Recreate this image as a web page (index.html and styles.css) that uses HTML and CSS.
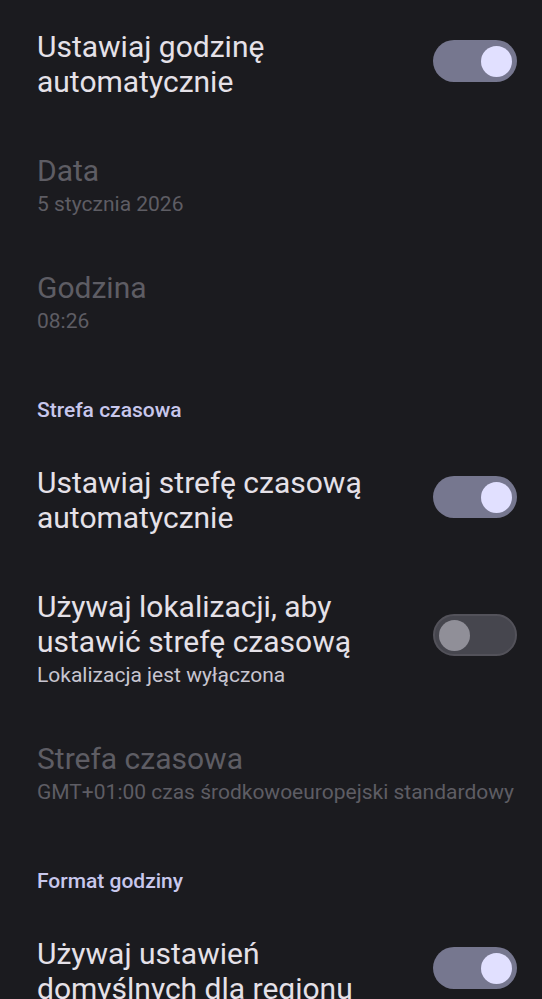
FILE: index.html
```html
<!DOCTYPE html>
<html lang="pl">
<head>
<meta charset="utf-8">
<link rel="stylesheet" href="styles.css">
</head>
<body>
<div class="list">
  <div class="item">
    <div class="text"><div class="title">Ustawiaj godzinę automatycznie</div></div>
    <div class="switch on"><span class="thumb"></span></div>
  </div>
  <div class="item disabled">
    <div class="text"><div class="title">Data</div><div class="summary">5 stycznia 2026</div></div>
  </div>
  <div class="item disabled">
    <div class="text"><div class="title">Godzina</div><div class="summary">08:26</div></div>
  </div>
  <div class="category">Strefa czasowa</div>
  <div class="item">
    <div class="text"><div class="title">Ustawiaj strefę czasową automatycznie</div></div>
    <div class="switch on"><span class="thumb"></span></div>
  </div>
  <div class="item">
    <div class="text"><div class="title">Używaj lokalizacji, aby ustawić strefę czasową</div><div class="summary">Lokalizacja jest wyłączona</div></div>
    <div class="switch off"><span class="thumb"></span></div>
  </div>
  <div class="item disabled">
    <div class="text"><div class="title">Strefa czasowa</div><div class="summary">GMT+01:00 czas środkowoeuropejski standardowy</div></div>
  </div>
  <div class="category">Format godziny</div>
  <div class="item">
    <div class="text"><div class="title">Używaj ustawień domyślnych dla regionu</div></div>
    <div class="switch on"><span class="thumb"></span></div>
  </div>
</div>
</body>
</html>
```
FILE: styles.css
```css
html, body {
  margin: 0;
  padding: 0;
  background: #1b1b1f;
}
body {
  font-family: Roboto, "Noto Sans", sans-serif;
  width: 542px;
  height: 999px;
  overflow: hidden;
}
.list {
  padding-top: 2px;
}
.item {
  display: flex;
  align-items: center;
  padding: 27px 25px 27px 37px;
}
.text {
  flex: 1;
  min-width: 0;
  padding-right: 36px;
}
.title {
  font-size: 30px;
  line-height: 35px;
  color: #e5e1e8;
}
.summary {
  margin-top: 4px;
  font-size: 21px;
  line-height: 24px;
  color: #c7c5d0;
  white-space: nowrap;
}
.disabled .title,
.disabled .summary {
  color: #5e5d64;
}
.category {
  padding: 38px 37px 15px;
  font-size: 21px;
  line-height: 25px;
  font-weight: 500;
  color: #c8c7ec;
}
.switch {
  flex: none;
  width: 84px;
  height: 42px;
  border-radius: 21px;
  box-sizing: border-box;
  display: flex;
  align-items: center;
  margin-bottom: 6px;
}
.switch.on {
  background: #76778f;
  justify-content: flex-end;
  padding-right: 5px;
}
.switch.off {
  background: #46464e;
  border: 2px solid #53525a;
  padding-left: 4px;
}
.thumb {
  width: 31px;
  height: 31px;
  border-radius: 50%;
}
.on .thumb {
  background: #e1e0ff;
}
.off .thumb {
  background: #908f98;
}
```
